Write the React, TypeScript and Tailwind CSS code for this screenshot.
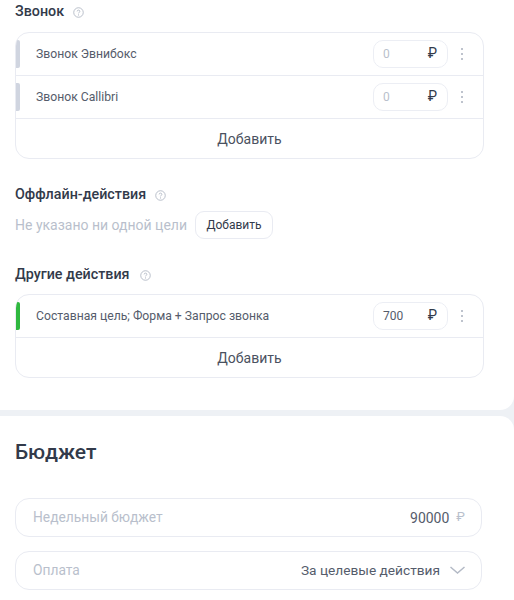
function Help() {
  return (
    <svg width="11" height="11" viewBox="0 0 12 12" fill="none" className="text-[#b4bac6]">
      <circle cx="6" cy="6" r="5.2" stroke="currentColor" strokeWidth="1" />
      <path d="M4.5 4.8c0-.9.7-1.4 1.5-1.4s1.5.5 1.5 1.3c0 1.2-1.5 1.1-1.5 2.3" stroke="currentColor" strokeWidth="1" />
      <circle cx="6" cy="8.6" r=".6" fill="currentColor" />
    </svg>
  )
}

function Title({ text, gap }: { text: string; gap: string }) {
  return (
    <div className={`flex items-center ${gap} h-5 text-[14.3px] font-medium text-[#323a4a]`}>
      <span>{text}</span>
      <Help />
    </div>
  )
}

function Dots() {
  return (
    <div className="flex flex-col gap-[3px] w-[2px] ml-[13px]">
      <span className="w-[2px] h-[2px] rounded-full bg-[#a9afbd]" />
      <span className="w-[2px] h-[2px] rounded-full bg-[#a9afbd]" />
      <span className="w-[2px] h-[2px] rounded-full bg-[#a9afbd]" />
    </div>
  )
}

function Row({ name, value, bar, valueColor }: { name: string; value: string; bar: string; valueColor: string }) {
  return (
    <div className="relative flex items-center h-[43px] pl-[20px] pr-[20px] border-b border-[#e9ebf2]">
      <span className={`absolute left-0 top-[7px] w-1 h-7 rounded-r-[2px] ${bar}`} />
      <span className="flex-1 text-[12.2px] text-[#555c6b]">{name}</span>
      <div className="flex items-center justify-between w-[75px] h-7 pl-[9px] pr-[10px] border border-[#eceef4] rounded-[10px]">
        <span className={`text-xs ${valueColor}`}>{value}</span>
        <span className="text-sm text-[#323a4a] -mt-[3px]">₽</span>
      </div>
      <Dots />
    </div>
  )
}

function AddRow() {
  return <div className="flex items-center justify-center h-[39px] text-sm text-[#4a5160]">Добавить</div>
}

function Field({ label, children }: { label: string; children: React.ReactNode }) {
  return (
    <div className="flex items-center justify-between h-[39px] pl-[17px] pr-4 border border-[#e9ebf2] rounded-[14px]">
      <span className="text-[13.8px] text-[#b9bfcc]">{label}</span>
      {children}
    </div>
  )
}

export default function App() {
  return (
    <div className="w-[514px] h-[600px] overflow-hidden bg-[#eef1f5] font-['Roboto',sans-serif]">
      <div className="h-[410px] pl-[15px] pr-[30px] bg-white rounded-br-[14px]">
        <div className="pt-[2px]">
          <Title text="Звонок" gap="gap-[9px]" />
        </div>
        <div className="mt-[10px] border border-[#e9ebf2] rounded-[14px] overflow-hidden">
          <Row name="Звонок Эвнибокс" value="0" bar="bg-[#d0d5e0]" valueColor="text-[#b9bfcc]" />
          <Row name="Звонок Callibri" value="0" bar="bg-[#d0d5e0]" valueColor="text-[#b9bfcc]" />
          <AddRow />
        </div>
        <div className="mt-[26px]">
          <Title text="Оффлайн-действия" gap="gap-[9px]" />
        </div>
        <div className="flex items-center gap-[8px] mt-[6px]">
          <span className="text-sm text-[#b9bfcc]">Не указано ни одной цели</span>
          <span className="flex items-center justify-center w-[78px] h-7 border border-[#e9ebf2] rounded-[9px] text-xs text-[#323a4a]">Добавить</span>
        </div>
        <div className="mt-[26px]">
          <Title text="Другие действия" gap="gap-[10px]" />
        </div>
        <div className="mt-[9px] border border-[#e9ebf2] rounded-[14px] overflow-hidden">
          <Row name="Составная цель; Форма + Запрос звонка" value="700" bar="bg-[#2fb83f]" valueColor="text-[#555c6b]" />
          <AddRow />
        </div>
      </div>
      <div className="h-[190px] mt-[6px] pl-[15px] pr-8 bg-white rounded-tr-[14px]">
        <div className="pt-[22px] text-[21px] font-medium leading-7 text-[#323a4a]">Бюджет</div>
        <div className="flex flex-col gap-[14px] mt-[32px]">
          <Field label="Недельный бюджет">
            <span className="flex items-center gap-[7px] text-sm text-[#555c6b]">
              90000 <span className="text-[13px] text-[#b9bfcc]">₽</span>
            </span>
          </Field>
          <Field label="Оплата">
            <span className="flex items-center gap-[10px] text-[13.7px] text-[#555c6b]">
              За целевые действия
              <svg width="15" height="8" viewBox="0 0 15 8" fill="none" className="text-[#b4bac6]">
                <path d="M.5 1l7 6 7-6" stroke="currentColor" strokeWidth="1.5" />
              </svg>
            </span>
          </Field>
        </div>
      </div>
    </div>
  )
}
